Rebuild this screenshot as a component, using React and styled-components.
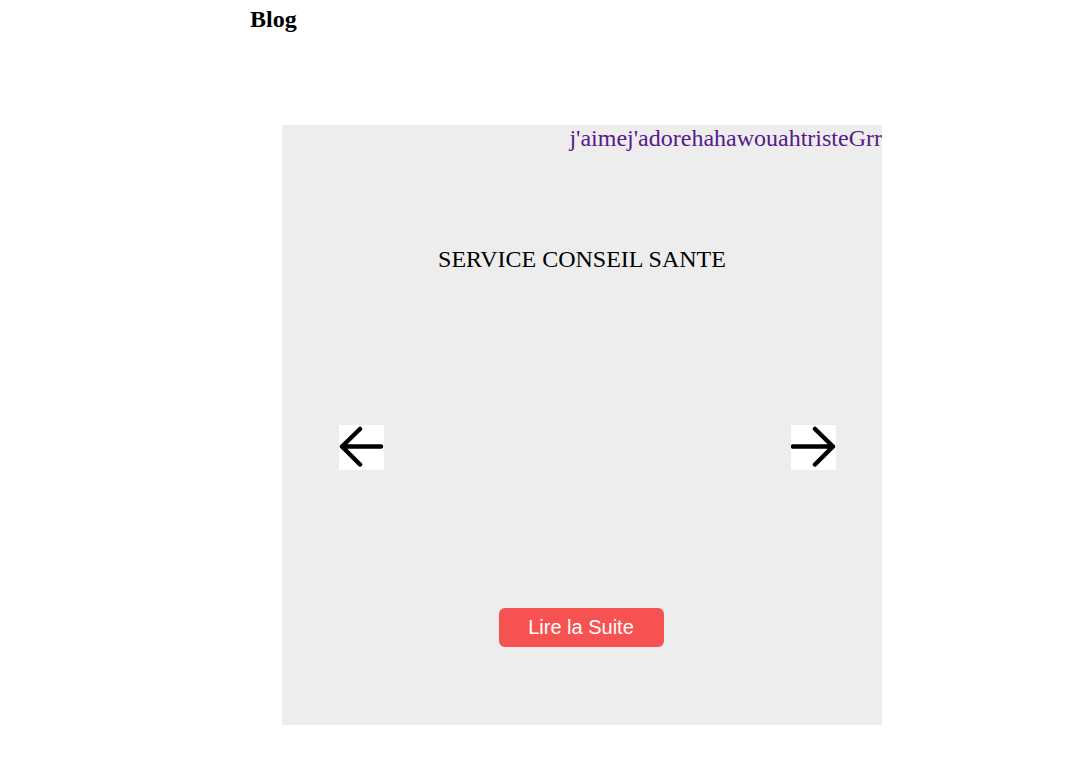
import styled, { createGlobalStyle } from 'styled-components';

const GlobalStyle = createGlobalStyle`
  body {
    margin: 8px;
    background: #ffffff;
    font-family: "Liberation Serif", "Times New Roman", serif;
  }
`;

const Page = styled.div`
  padding-left: 242px;
`;

const Title = styled.h2`
  margin: 0;
  font-size: 24px;
  font-weight: bold;
  line-height: 23px;
  color: #000;
`;

const Slider = styled.section`
  width: 600px;
  height: 600px;
  margin: 94px 0 0 32px;
  background-color: #ededed;
  display: flex;
  flex-direction: column;
`;

const Reactions = styled.div`
  display: flex;
  justify-content: flex-end;
  font-size: 24px;
  a {
    color: #551a8b;
    text-decoration: none;
  }
`;

const SlideTitle = styled.div`
  margin-top: 94px;
  text-align: center;
  font-size: 24px;
  color: #000;
`;

const Controls = styled.div`
  margin-top: 152px;
  display: flex;
  justify-content: space-between;
  padding: 0 46px 0 57px;
`;

const ArrowButton = styled.button`
  width: 45px;
  height: 45px;
  padding: 0;
  border: none;
  background: #ffffff;
  cursor: pointer;
  svg {
    display: block;
  }
`;

const Actions = styled.div`
  margin-top: 138px;
  display: flex;
  justify-content: center;
  padding-right: 2px;
`;

const ReadMore = styled.button`
  width: 165px;
  height: 39px;
  border: none;
  border-radius: 6px;
  background-color: #f65252;
  color: #ffffff;
  font-family: "Liberation Sans", Arial, sans-serif;
  font-size: 20px;
  cursor: pointer;
`;

const Arrow = ({ dir }) => (
  <svg width="45" height="45" viewBox="0 0 45 45" fill="none" stroke="#000" strokeWidth="4.5" strokeLinecap="round" strokeLinejoin="round">
    {dir === 'left' ? (
      <path d="M42 21.5H3M21 4L3 21.5L21 39.5" />
    ) : (
      <path d="M2 21.5H42M24 4L42 21.5L24 39.5" />
    )}
  </svg>
);

const reactions = ["j'aime", "j'adore", 'haha', 'wouah', 'triste', 'Grr'];

const App = () => {
  return (
    <>
      <GlobalStyle />
      <Page>
        <Title>Blog</Title>
        <Slider>
          <Reactions>
            {reactions.map((r) => (
              <a href="#" key={r}>{r}</a>
            ))}
          </Reactions>
          <SlideTitle>SERVICE CONSEIL SANTE</SlideTitle>
          <Controls>
            <ArrowButton aria-label="précédent">
              <Arrow dir="left" />
            </ArrowButton>
            <ArrowButton aria-label="suivant">
              <Arrow dir="right" />
            </ArrowButton>
          </Controls>
          <Actions>
            <ReadMore>Lire la Suite</ReadMore>
          </Actions>
        </Slider>
      </Page>
    </>
  );
};

export default App;
